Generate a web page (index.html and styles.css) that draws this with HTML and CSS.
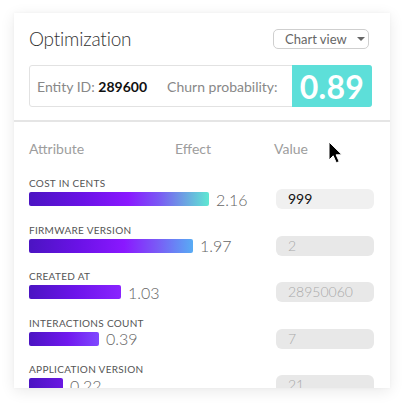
FILE: index.html
```html
<!DOCTYPE html>
<html>
<head>
<meta charset="utf-8">
<link rel="stylesheet" href="styles.css">
</head>
<body>
<div class="card">
  <div class="top">
    <div class="head">
      <h1 class="title">Optimization</h1>
      <div class="select">Chart view <span class="caret"></span></div>
    </div>
    <div class="entity">
      <div class="info">
        <span class="lbl">Entity ID: <b>289600</b></span>
        <span class="lbl churn">Churn probability:</span>
      </div>
      <div class="score">0.89</div>
    </div>
  </div>
  <div class="bottom">
    <div class="cols">
      <span class="c-attr">Attribute</span>
      <span class="c-eff">Effect</span>
      <span class="c-val">Value</span>
    </div>
    <div class="row">
      <div class="attr">
        <div class="name">COST IN CENTS</div>
        <div class="effect"><span class="bar g1" style="width:180px"></span><span class="num">2.16</span></div>
      </div>
      <div class="val active">999</div>
    </div>
    <div class="row">
      <div class="attr">
        <div class="name">FIRMWARE VERSION</div>
        <div class="effect"><span class="bar g2" style="width:164px"></span><span class="num">1.97</span></div>
      </div>
      <div class="val">2</div>
    </div>
    <div class="row">
      <div class="attr">
        <div class="name">CREATED AT</div>
        <div class="effect"><span class="bar g3" style="width:92px"></span><span class="num">1.03</span></div>
      </div>
      <div class="val">28950060</div>
    </div>
    <div class="row">
      <div class="attr">
        <div class="name">INTERACTIONS COUNT</div>
        <div class="effect"><span class="bar g4" style="width:70px"></span><span class="num">0.39</span></div>
      </div>
      <div class="val">7</div>
    </div>
    <div class="row">
      <div class="attr">
        <div class="name">APPLICATION VERSION</div>
        <div class="effect"><span class="bar g5" style="width:34px"></span><span class="num">0.22</span></div>
      </div>
      <div class="val">21</div>
    </div>
    <svg class="cursor" width="15" height="23" viewBox="0 0 15 23"><path d="M1 1 L1 19 L5.2 14.8 L8.3 21.8 L11.2 20.6 L8.1 13.8 L14 13.8 Z" fill="#000" stroke="#fff" stroke-width="1" stroke-linejoin="miter"/></svg>
  </div>
</div>
</body>
</html>
```
FILE: styles.css
```css
* { box-sizing: border-box; }
html, body { margin: 0; padding: 0; background: #fff; }
body { font-family: Lato, "Open Sans", sans-serif; width: 404px; height: 403px; overflow: hidden; }

.card {
  margin: 13px 0 0 14px;
  width: 376px;
  height: 375px;
  background: #fff;
  overflow: hidden;
  box-shadow: 0 3px 14px rgba(0,0,0,0.09), 0 0 3px rgba(0,0,0,0.04);
}

.top {
  padding: 15px 18px 0 15px;
  height: 109px;
  border-bottom: 2px solid #e5e5e5;
}
.head {
  display: flex;
  justify-content: space-between;
  align-items: center;
  height: 22px;
}
.title {
  margin: 0;
  font-size: 19px;
  font-weight: 300;
  color: #333;
  letter-spacing: -0.2px;
  line-height: 22px;
}
.select {
  width: 96px;
  height: 20px;
  margin-right: 3px;
  border: 1px solid #cfcfcf;
  border-radius: 5px;
  font-size: 13px;
  color: #666;
  display: flex;
  align-items: center;
  padding-left: 11px;
  gap: 10px;
  line-height: 18px;
}
.caret {
  width: 0; height: 0;
  border-left: 4px solid transparent;
  border-right: 4px solid transparent;
  border-top: 4px solid #666;
}

.entity {
  margin-top: 15px;
  height: 42px;
  border: 1px solid #e2e2e2;
  border-radius: 3px;
  display: flex;
  justify-content: space-between;
  align-items: stretch;
}
.info {
  display: flex;
  align-items: center;
  padding-left: 7px;
  gap: 20px;
  font-size: 14px;
  color: #888;
}
.info b { color: #111; font-weight: 700; }
.score {
  width: 80px;
  margin: -1px -1px -1px 0;
  background: #5ddfd9;
  border-radius: 0 3px 3px 0;
  color: #fff;
  font-weight: 700;
  font-size: 32px;
  display: flex;
  align-items: center;
  justify-content: center;
  letter-spacing: 0.3px;
}

.bottom {
  position: relative;
  padding: 17px 16px 0 15px;
}
.cols {
  display: flex;
  height: 20px;
  font-size: 14px;
  color: #9d9d9d;
  line-height: 20px;
  margin-bottom: 18px;
}
.c-attr { width: 146px; }
.c-eff { width: 99px; }

.row {
  display: flex;
  justify-content: space-between;
  align-items: flex-end;
  margin-bottom: 14.5px;
}
.name {
  font-size: 10px;
  line-height: 12px;
  color: #555;
  letter-spacing: 0.3px;
}
.effect {
  display: flex;
  align-items: center;
  height: 20px;
}
.bar {
  display: block;
  height: 14px;
  border-radius: 2px;
}
.num {
  margin-left: 7px;
  font-size: 16px;
  font-weight: 300;
  color: #666;
}
.g1 { background: linear-gradient(90deg, #4b14c2 0%, #6a12e6 30%, #8a18ff 55%, #7a58f4 72%, #5ee8d2 100%); }
.g2 { background: linear-gradient(90deg, #4b14c2 0%, #6a12e6 30%, #8a18ff 58%, #7a5af6 78%, #58acf4 100%); }
.g3 { background: linear-gradient(90deg, #4b14c2 0%, #6c14ea 50%, #8a24ff 100%); }
.g4 { background: linear-gradient(90deg, #4b14c2 0%, #7018ee 55%, #8048ff 100%); }
.g5 { background: linear-gradient(90deg, #4b14c2 0%, #6a18e2 100%); }

.val {
  width: 98px;
  height: 20px;
  border-radius: 6px;
  background: #e8e8e8;
  color: #aaa;
  font-size: 14px;
  font-weight: 300;
  line-height: 20px;
  padding-left: 12px;
}
.val.active { background: #f0f0f0; color: #111; font-weight: 400; }

.cursor {
  position: absolute;
  left: 314px;
  top: 19px;
}
```
